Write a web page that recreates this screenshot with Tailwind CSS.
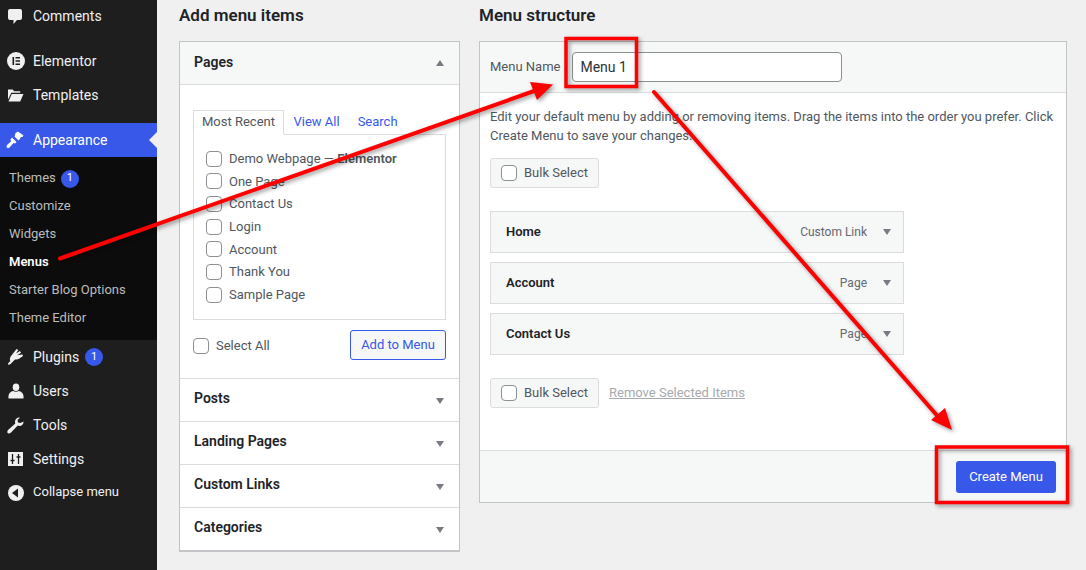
<!DOCTYPE html>
<html lang="en">
<head>
<meta charset="utf-8">
<title>Menus</title>
<script src="https://cdn.jsdelivr.net/npm/@tailwindcss/browser@4"></script>
</head>
<body class="m-0 bg-[#f0f0f1] overflow-hidden font-['Roboto',sans-serif] text-[13px] text-[#50575e]">
<div class="relative flex w-[1086px] h-[570px] overflow-hidden">

  <!-- Sidebar -->
  <aside class="w-[157px] h-[570px] shrink-0 bg-[#1e1e1e] text-[#f0f0f1] text-[14px]">
    <nav class="-mt-px flex flex-col">
      <a class="h-[34px] flex items-center">
        <span class="w-[33px] flex justify-center"><svg class="w-[20px] h-[20px] -ml-[3px]" viewBox="0 0 20 20" fill="#f0f0f1"><path d="M5 3h10a2 2 0 0 1 2 2v7a2 2 0 0 1-2 2h-3l-3.500 4v-4H5a2 2 0 0 1-2-2V5a2 2 0 0 1 2-2z"/></svg></span>Comments
      </a>
      <div class="h-[11px]"></div>
      <a class="h-[34px] flex items-center">
        <span class="w-[33px] flex justify-center"><svg class="w-[18px] h-[18px] -ml-[2px]" viewBox="0 0 18 18"><circle cx="9" cy="9" r="9" fill="#f0f0f1"/><path fill="#1e1e1e" d="M5.500 5h1.600v8H5.500zM8.500 5H13v1.600H8.500zM8.500 8.200H13v1.600H8.500zM8.500 11.400H13V13H8.500z"/></svg></span>Elementor
      </a>
      <a class="h-[34px] flex items-center">
        <span class="w-[33px] flex justify-center"><svg class="w-[17px] h-[15px] -ml-[3px]" viewBox="0 0 18 16" fill="#f0f0f1"><path d="M1 1.500h5l1.500 2H14V5H4.500L1.500 11.500H1zM5 6.500h12.500L14 14.500H1.500z"/></svg></span>Templates
      </a>
      <div class="h-[11px]"></div>
      <a class="relative h-[34px] flex items-center bg-[#3858e9] text-white">
        <span class="w-[33px] flex justify-center"><svg class="w-[20px] h-[20px] -ml-[3px]" viewBox="0 0 20 20" fill="#fff"><path d="M10.500 3l2.500-1.500 5.500 4-1 1.500-1.500 0-1.500 2.500-1 1-4-4 .5-1.500zM7 7.500l4.500 4.500-1.500 1.500-1.500-.5-4 4.500c-1 1-3 .5-3-1 0-.7.300-1.200.800-1.700L6 11.500 5.500 9.500z"/></svg></span>Appearance
        <span class="absolute right-0 top-[9px] w-0 h-0 border-y-[8px] border-y-transparent border-r-[8px] border-r-[#f0f0f1]"></span>
      </a>
      <div class="bg-[#0c0c0c] h-[183px] pt-[7px] pb-[8px] text-[13px] text-[#bcbcbc]">
        <a class="h-[28px] pl-[9px] flex items-center">Themes<span class="ml-[5px] mt-[1px] w-[18px] h-[18px] rounded-full bg-[#3858e9] text-white text-[11px] flex items-center justify-center">1</span></a>
        <a class="h-[28px] pl-[9px] flex items-center">Customize</a>
        <a class="h-[28px] pl-[9px] flex items-center">Widgets</a>
        <a class="h-[28px] pl-[9px] flex items-center text-white font-semibold">Menus</a>
        <a class="h-[28px] pl-[9px] flex items-center">Starter Blog Options</a>
        <a class="h-[28px] pl-[9px] flex items-center">Theme Editor</a>
      </div>
      <a class="h-[34px] flex items-center">
        <span class="w-[33px] flex justify-center"><svg class="w-[18px] h-[18px] -ml-[2px]" viewBox="0 0 18 18" fill="#f0f0f1"><path d="M9.500 1l1.800 1-2.300 3.500L13 3l1 1.800-3.800 2.400 5.300-.7.500 1.500-3.500 2.500c-1.500 1-3 1.400-4.500.9L3.500 16 1.500 17l-.5-1.500 2.300-2.500c-.6-1.500-.5-3 .4-4.500z"/></svg></span>Plugins<span class="ml-[6px] w-[18px] h-[18px] rounded-full bg-[#3858e9] text-white text-[11px] flex items-center justify-center">1</span>
      </a>
      <a class="h-[34px] flex items-center">
        <span class="w-[33px] flex justify-center"><svg class="w-[16px] h-[16px] -ml-[2px]" viewBox="0 0 16 17" fill="#f0f0f1"><ellipse cx="8" cy="4.500" rx="3.500" ry="4"/><path d="M0 14c0-3 2.500-5 5-5.500 1.500 1 4.500 1 6 0 2.500.5 5 2.500 5 5.500v2.500H0z"/></svg></span>Users
      </a>
      <a class="h-[34px] flex items-center">
        <span class="w-[17px] h-[17px] ml-[7px] mr-[9px] block"><svg class="w-[17px] h-[17px]" viewBox="0 0 17 17" fill="#f0f0f1"><path d="M16.500 4.500c.3 2-1.500 4.500-4 4.500-.6 0-1.200-.1-1.700-.4L4 15.500c-1 1-2.500 1.500-3.300.6-.8-.9-.4-2.300.6-3.300l7-6.300C8 5.900 8 5.300 8 4.500 8 2 10.500 0 13 .5l-2.500 2.500.5 2.500 2.500.5z"/></svg></span>Tools
      </a>
      <a class="h-[34px] flex items-center">
        <span class="w-[33px] flex justify-center"><svg class="w-[15px] h-[14px] -ml-[2px]" viewBox="0 0 15 14"><rect width="15" height="14" fill="#f0f0f1"/><path fill="none" stroke="#1e1e1e" stroke-width="1.300" d="M4.500 2v10M2.500 8.500h4M10.500 2v10M8.500 5h4"/></svg></span>Settings
      </a>
      <a class="h-[33px] flex items-center text-[13px]">
        <span class="w-[33px] flex justify-center"><svg class="w-[16px] h-[16px] -ml-[2px] mt-[1px]" viewBox="0 0 16 16"><circle cx="8" cy="8" r="8" fill="#f0f0f1"/><path fill="#1e1e1e" d="M10 3.500v9L4 8z"/></svg></span><span class="-mt-[1px]">Collapse menu</span>
      </a>
    </nav>
  </aside>

  <!-- Main -->
  <main class="ml-[22px] flex gap-[19px] items-start">
    <!-- Left column -->
    <section class="w-[281px]">
      <h2 class="h-[32px] mb-[9px] flex items-center text-[17px] font-semibold text-[#1d2327]">Add menu items</h2>
      <div class="border border-[#c3c4c7] border-b-2 bg-white h-[511px] flex flex-col">
        <div class="h-[43px] shrink-0 bg-[#f6f7f7] border-b border-[#dcdcde] flex items-center justify-between pl-[14px] pr-[15px] text-[14px] font-semibold text-[#1d2327]">
          <span class="-mt-[2px]">Pages</span>
          <span class="w-0 h-0 border-x-[4px] border-x-transparent border-b-[6px] border-b-[#787c82]"></span>
        </div>
        <div class="h-[293px] shrink-0 px-[13px] pt-[25px]">
          <div class="flex h-[25px] items-end relative z-10">
            <span class="w-[91px] h-[25px] pb-[2px] border border-[#dcdcde] border-b-white bg-white flex items-center justify-center text-[#50575e]">Most Recent</span>
            <a class="ml-[9.500px] h-[24px] pb-[2px] flex items-center text-[#3858e9]">View All</a>
            <a class="ml-[18px] h-[24px] pb-[2px] flex items-center text-[#3858e9]">Search</a>
          </div>
          <div class="-mt-px w-[253px] h-[186px] border border-[#dcdcde] pt-[12.300px] pl-[12px]">
            <label class="h-[22.700px] flex items-center gap-[7px]"><span class="w-[16px] h-[16px] rounded-[4px] border border-[#8c8f94] bg-white"></span><span>Demo Webpage — <b class="font-semibold">Elementor</b></span></label>
            <label class="h-[22.700px] flex items-center gap-[7px]"><span class="w-[16px] h-[16px] rounded-[4px] border border-[#8c8f94] bg-white"></span>One Page</label>
            <label class="h-[22.700px] flex items-center gap-[7px]"><span class="w-[16px] h-[16px] rounded-[4px] border border-[#8c8f94] bg-white"></span>Contact Us</label>
            <label class="h-[22.700px] flex items-center gap-[7px]"><span class="w-[16px] h-[16px] rounded-[4px] border border-[#8c8f94] bg-white"></span>Login</label>
            <label class="h-[22.700px] flex items-center gap-[7px]"><span class="w-[16px] h-[16px] rounded-[4px] border border-[#8c8f94] bg-white"></span>Account</label>
            <label class="h-[22.700px] flex items-center gap-[7px]"><span class="w-[16px] h-[16px] rounded-[4px] border border-[#8c8f94] bg-white"></span>Thank You</label>
            <label class="h-[22.700px] flex items-center gap-[7px]"><span class="w-[16px] h-[16px] rounded-[4px] border border-[#8c8f94] bg-white"></span>Sample Page</label>
          </div>
          <div class="w-[253px] mt-[10px] flex items-center justify-between">
            <label class="flex items-center gap-[7px] mt-[1px]"><span class="w-[16px] h-[16px] rounded-[4px] border border-[#8c8f94] bg-white"></span>Select All</label>
            <button class="w-[96px] h-[30px] rounded-[3px] border border-[#3858e9] bg-[#f6f7f7] text-[#3858e9] text-[13px]">Add to Menu</button>
          </div>
        </div>
        <div class="h-[43px] shrink-0 border-t border-[#dcdcde] flex items-center justify-between pl-[14px] pr-[15px] text-[14px] font-semibold text-[#1d2327]"><span class="-mt-[3px]">Posts</span><span class="mt-[1px] w-0 h-0 border-x-[4px] border-x-transparent border-t-[6px] border-t-[#787c82]"></span></div>
        <div class="h-[43px] shrink-0 border-t border-[#dcdcde] flex items-center justify-between pl-[14px] pr-[15px] text-[14px] font-semibold text-[#1d2327]"><span class="-mt-[3px]">Landing Pages</span><span class="mt-[1px] w-0 h-0 border-x-[4px] border-x-transparent border-t-[6px] border-t-[#787c82]"></span></div>
        <div class="h-[43px] shrink-0 border-t border-[#dcdcde] flex items-center justify-between pl-[14px] pr-[15px] text-[14px] font-semibold text-[#1d2327]"><span class="-mt-[3px]">Custom Links</span><span class="mt-[1px] w-0 h-0 border-x-[4px] border-x-transparent border-t-[6px] border-t-[#787c82]"></span></div>
        <div class="h-[43px] shrink-0 border-t border-[#dcdcde] flex items-center justify-between pl-[14px] pr-[15px] text-[14px] font-semibold text-[#1d2327]"><span class="-mt-[3px]">Categories</span><span class="mt-[1px] w-0 h-0 border-x-[4px] border-x-transparent border-t-[6px] border-t-[#787c82]"></span></div>
      </div>
    </section>

    <!-- Right column -->
    <section class="w-[588px]">
      <h2 class="h-[32px] mb-[9px] flex items-center text-[17px] font-semibold text-[#1d2327]">Menu structure</h2>
      <div class="border border-[#c3c4c7] bg-white h-[462px] flex flex-col">
        <div class="h-[51px] shrink-0 bg-[#f6f7f7] border-b border-[#dcdcde] flex items-center pl-[10px]">
          <span>Menu Name</span>
          <input value="Menu 1" class="ml-[12px] w-[270px] h-[30px] rounded-[4px] border border-[#8c8f94] bg-white px-[7px] text-[14px] text-[#2c3338]">
        </div>
        <div class="flex-1 pl-[10px] pr-[10px] pt-[14px]">
          <p class="leading-[19px] w-[570px]">Edit your default menu by adding or removing items. Drag the items into the order you prefer. Click Create Menu to save your changes.</p>
          <div class="mt-[13px] w-[109px] h-[30px] rounded-[3px] border border-[#dcdcde] bg-[#f6f7f7] flex items-center pl-[10px] gap-[7px]"><span class="w-[16px] h-[16px] rounded-[4px] border border-[#8c8f94] bg-white"></span>Bulk Select</div>
          <ul class="mt-[23px] w-[414px] flex flex-col gap-[9px]">
            <li class="h-[42px] bg-[#f6f7f7] border border-[#dcdcde] flex items-center pl-[15px] pr-[12px] font-semibold text-[#1d2327]"><span class="flex-1">Home</span><span class="font-normal text-[12px] text-[#646970] mr-[16px]">Custom Link</span><span class="w-0 h-0 border-x-[4px] border-x-transparent border-t-[6px] border-t-[#787c82]"></span></li>
            <li class="h-[42px] bg-[#f6f7f7] border border-[#dcdcde] flex items-center pl-[15px] pr-[12px] font-semibold text-[#1d2327]"><span class="flex-1">Account</span><span class="font-normal text-[12px] text-[#646970] mr-[16px]">Page</span><span class="w-0 h-0 border-x-[4px] border-x-transparent border-t-[6px] border-t-[#787c82]"></span></li>
            <li class="h-[42px] bg-[#f6f7f7] border border-[#dcdcde] flex items-center pl-[15px] pr-[12px] font-semibold text-[#1d2327]"><span class="flex-1">Contact Us</span><span class="font-normal text-[12px] text-[#646970] mr-[16px]">Page</span><span class="w-0 h-0 border-x-[4px] border-x-transparent border-t-[6px] border-t-[#787c82]"></span></li>
          </ul>
          <div class="mt-[23px] flex items-center">
            <div class="w-[109px] h-[30px] rounded-[3px] border border-[#dcdcde] bg-[#f6f7f7] flex items-center pl-[10px] gap-[7px]"><span class="w-[16px] h-[16px] rounded-[4px] border border-[#8c8f94] bg-white"></span>Bulk Select</div>
            <a class="ml-[10px] underline text-[#a7aaad]">Remove Selected Items</a>
          </div>
        </div>
        <div class="h-[52px] shrink-0 bg-[#f6f7f7] border-t border-[#dcdcde] flex items-center justify-end pr-[10px]">
          <button class="w-[100px] h-[32px] rounded-[3px] bg-[#3858e9] text-white text-[13px]">Create Menu</button>
        </div>
      </div>
    </section>
  </main>

  <!-- Red annotations -->
  <svg class="absolute left-0 top-0 w-[1086px] h-[570px] pointer-events-none drop-shadow-[2px_2px_2px_rgba(0,0,0,0.4)]" viewBox="0 0 1086 570">
    <g fill="none" stroke="#ff0000">
      <rect x="566" y="38.500" width="70.500" height="48" stroke-width="3.500"/>
      <rect x="936.500" y="447" width="131" height="55.500" stroke-width="3.500"/>
      <path stroke-width="4" stroke-linecap="round" d="M60 258.500L537 90"/>
      <path stroke-width="4" stroke-linecap="round" d="M654 92L941 420"/>
    </g>
    <path fill="#ff0000" d="M530 82L553 84.500 537 100zM945 408L952 430 931 420z"/>
  </svg>
</div>
</body>
</html>
